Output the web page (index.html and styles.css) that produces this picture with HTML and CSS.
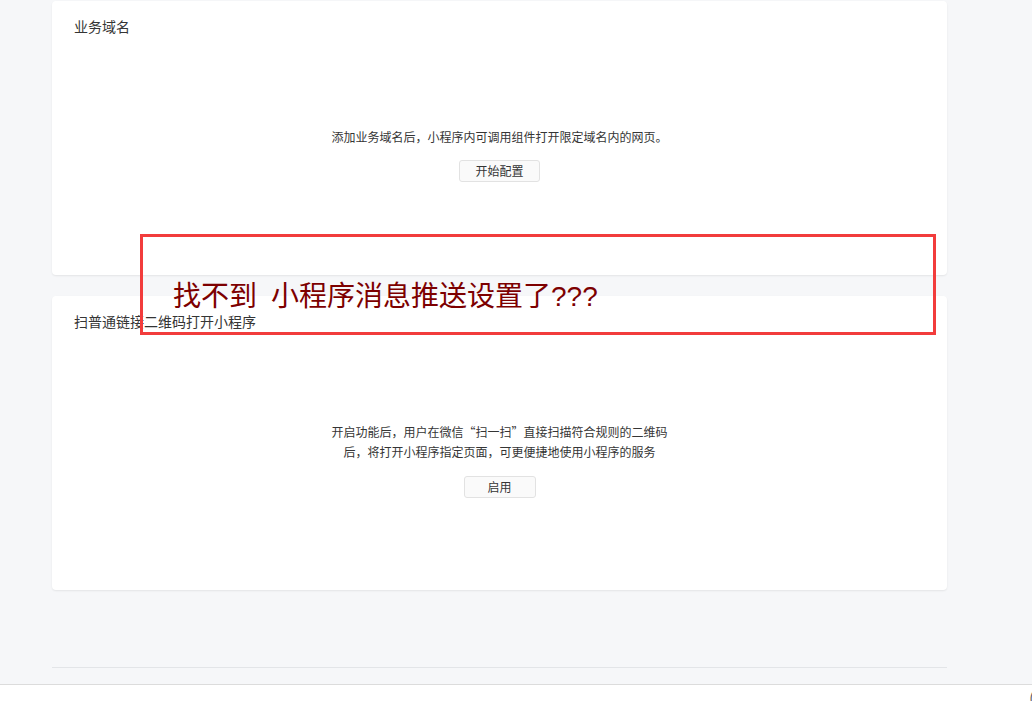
FILE: index.html
```html
<!DOCTYPE html>
<html lang="zh-CN">
<head>
    <meta charset="UTF-8">
    <meta name="viewport" content="width=device-width, initial-scale=1.0">
    <title>开发设置</title>
    <link rel="stylesheet" href="styles.css">
</head>
<body>
    <div class="main">
        <div class="card">
            <h3 class="card-title">业务域名</h3>
            <div class="card-body first">
                <p>添加业务域名后，小程序内可调用组件打开限定域名内的网页。</p>
                <button class="btn btn-config">开始配置</button>
            </div>
        </div>

        <div class="card">
            <h3 class="card-title">扫普通链接二维码打开小程序</h3>
            <div class="card-body">
                <p class="narrow">开启功能后，用户在微信“扫一扫”直接扫描符合规则的二维码后，将打开小程序指定页面，可更便捷地使用小程序的服务</p>
                <button class="btn btn-enable">启用</button>
            </div>
        </div>

        <div class="divider"></div>
    </div>

    <div class="footer-bar">
        <span class="corner">(</span>
    </div>

    <!-- annotation drawn on top of the screenshot -->
    <div class="note">
        <span class="note-text">找不到<span class="gap"></span>小程序消息推送设置了<span class="q">???</span></span>
    </div>
</body>
</html>
```

FILE: styles.css
```css
body {
    margin: 0;
    background: #f6f7f9;
    font-family: "Noto Sans CJK SC", "Liberation Sans", sans-serif;
    color: #353535;
    overflow: hidden;
}
.main {
    width: 895px;
    margin-left: 52px;
    padding-top: 1px;
}
.card {
    background: #fff;
    border-radius: 4px;
    box-shadow: 0 1px 2px rgba(0, 0, 0, 0.08);
    padding: 15px 22px 0;
    margin-bottom: 21px;
}
.card-title {
    margin: 0;
    font-size: 14px;
    font-weight: normal;
    line-height: 20px;
}
.card-body {
    text-align: center;
    padding: 91px 0 92px;
}
.card-body.first {
    padding-top: 91px;
    padding-bottom: 93px;
}
.card-body p {
    margin: 0 auto;
    font-size: 12px;
    line-height: 20px;
}
.card-body p.narrow {
    width: 340px;
}
.btn {
    display: inline-block;
    margin-top: 13px;
    height: 22px;
    padding: 0;
    font-family: inherit;
    font-size: 12px;
    line-height: 20px;
    color: #353535;
    background: #fafafa;
    border: 1px solid #e2e2e2;
    border-radius: 3px;
}
.btn-config {
    width: 81px;
}
.btn-enable {
    width: 72px;
    margin-top: 14px;
}
.divider {
    margin-top: 77px;
    height: 1px;
    background: #e3e5e8;
}
.footer-bar {
    margin-top: 16px;
    height: 40px;
    background: #fff;
    border-top: 1px solid #dcdcdc;
    position: relative;
}
.corner {
    position: absolute;
    right: -2px;
    top: 2px;
    font-size: 14px;
    color: #555;
}
.note {
    position: absolute;
    left: 140px;
    top: 234px;
    width: 790px;
    height: 95px;
    border: 3px solid #f23c3c;
}
.note-text {
    position: absolute;
    left: 30px;
    top: 43px;
    font-size: 28px;
    line-height: 28px;
    color: #7d0000;
    white-space: nowrap;
}
.note-text .gap {
    display: inline-block;
    width: 14px;
}
.note-text .q {
    font-family: "Liberation Sans", sans-serif;
}
```
